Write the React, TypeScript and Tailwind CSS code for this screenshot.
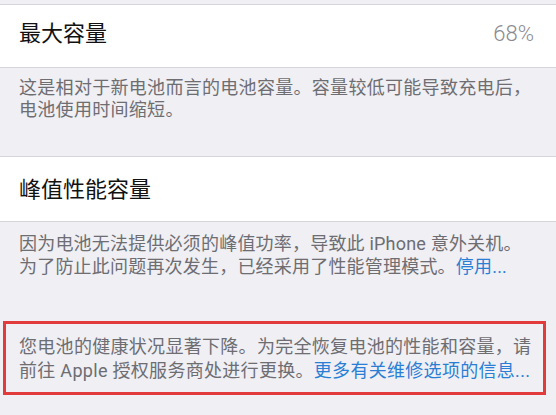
export default function App() {
  return (
    <div className="w-[556px] h-[415px] overflow-hidden bg-[#efeff4] font-['Roboto','Noto_Sans_CJK_SC',sans-serif]">
      {/* Maximum capacity */}
      <div className="h-[4px]" />
      <div className="h-[64px] bg-white border-y border-[#d6d6da] flex items-center justify-between pl-[19px] pr-[22px] pb-[5px]">
        <span className="text-[22px] text-[#111]">最大容量</span>
        <span className="text-[22px] font-light text-[#8a8a8f]">68%</span>
      </div>
      <div className="h-[88px] px-[19px] pt-[9px] text-[18px] leading-[22px] tracking-[0.3px] text-[#6d6d72] whitespace-nowrap">
        这是相对于新电池而言的电池容量。容量较低可能导致充电后，
        <br />
        电池使用时间缩短。
      </div>

      {/* Peak performance */}
      <div className="h-[66px] bg-white border-y border-[#d6d6da] flex items-center pl-[19px]">
        <span className="text-[22px] text-[#111]">峰值性能容量</span>
      </div>
      <div className="h-[99px] px-[19px] pt-[10px] text-[18px] leading-[23px] tracking-[0.2px] text-[#6d6d72] whitespace-nowrap">
        因为电池无法提供必须的峰值功率，导致此 iPhone 意外关机。
        <br />
        为了防止此问题再次发生，已经采用了性能管理模式。
        <span className="text-[#2a7fd4]">停用...</span>
      </div>

      {/* Highlighted warning */}
      <div className="ml-[3px] w-[543px] h-[74px] border-[3px] border-[#e23b3b] pl-[13px] pt-[11px] text-[18px] leading-[24px] tracking-[0.3px] text-[#6d6d72] whitespace-nowrap">
        您电池的健康状况显著下降。为完全恢复电池的性能和容量，请
        <br />
        前往 Apple 授权服务商处进行更换。
        <span className="text-[#2a7fd4]">更多有关维修选项的信息...</span>
      </div>
    </div>
  )
}
